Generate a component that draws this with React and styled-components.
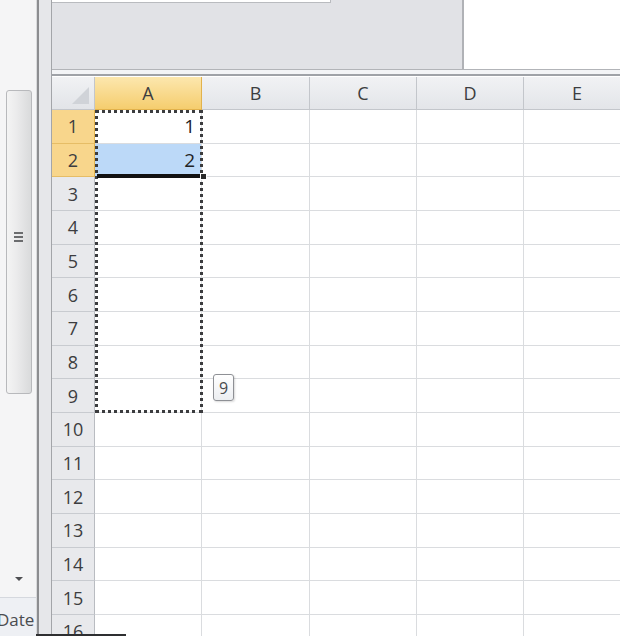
import React from 'react';
import styled, { createGlobalStyle } from 'styled-components';

const GlobalStyle = createGlobalStyle`
    html, body {
        margin: 0;
        padding: 0;
        background: #ffffff;
    }
    body {
        font-family: "Open Sans", "Liberation Sans", sans-serif;
    }
`;

const COLS = ['A', 'B', 'C', 'D', 'E'];
const ROWS = Array.from({ length: 16 }, (_, i) => i + 1);
const VALUES = { 'A1': 1, 'A2': 2 };

const App = () => {
    return (
        <>
            <GlobalStyle />
            <Screen>
                <LeftPane>
                    <ScrollTrack>
                        <Thumb>
                            <Grip>
                                <span />
                                <span />
                                <span />
                            </Grip>
                        </Thumb>
                        <DownArrow />
                    </ScrollTrack>
                    <Hint>Date r</Hint>
                </LeftPane>
                <Gutter />
                <Main>
                    <TopBar>
                        <Ribbon>
                            <RibbonStrip />
                        </Ribbon>
                        <BlankArea />
                    </TopBar>
                    <Divider />
                    <Sheet>
                        <Corner>
                            <CornerMark />
                        </Corner>
                        {COLS.map((c) => (
                            <ColHead key={c} $active={c === 'A'}>{c}</ColHead>
                        ))}
                        {ROWS.map((r) => (
                            <React.Fragment key={r}>
                                <RowHead $active={r <= 2}>{r}</RowHead>
                                {COLS.map((c) => (
                                    <Cell key={c} $selected={c === 'A' && r === 2}>
                                        {VALUES[c + r]}
                                    </Cell>
                                ))}
                            </React.Fragment>
                        ))}
                        <Marquee />
                        <FillBar />
                        <FillHandle />
                        <FillTip>9</FillTip>
                    </Sheet>
                </Main>
                <BottomEdge />
            </Screen>
        </>
    );
};

const Screen = styled.div`
    position: relative;
    width: 620px;
    height: 636px;
    overflow: hidden;
    display: flex;
`;

const LeftPane = styled.div`
    width: 36px;
    flex-shrink: 0;
    display: flex;
    flex-direction: column;
    background: #f5f5f6;
    border-right: 1px solid #d9dadc;
`;

const ScrollTrack = styled.div`
    flex: 1;
    display: flex;
    flex-direction: column;
    align-items: center;
    padding-top: 90px;
    padding-left: 1px;
`;

const Thumb = styled.div`
    width: 24px;
    height: 302px;
    border: 1px solid #b8b9bc;
    border-radius: 3px;
    background: linear-gradient(to right, #f4f4f4 0%, #ebebec 40%, #d9dadb 100%);
    display: flex;
    align-items: center;
    justify-content: center;
`;

const Grip = styled.div`
    display: flex;
    flex-direction: column;
    gap: 2px;
    margin-top: -10px;

    span {
        display: block;
        width: 9px;
        height: 2px;
        background: #6b6c6e;
    }
`;

const DownArrow = styled.div`
    margin-top: 183px;
    width: 0;
    height: 0;
    border-left: 4px solid transparent;
    border-right: 4px solid transparent;
    border-top: 4px solid #4e4f52;
`;

const Hint = styled.div`
    height: 38px;
    flex-shrink: 0;
    padding-left: 0;
    margin-left: -3px;
    border-top: 1px solid #d5d8de;
    background: #eef0f4;
    color: #4a4c50;
    font-size: 17px;
    line-height: 44px;
    white-space: nowrap;
    overflow: hidden;
`;

const Gutter = styled.div`
    width: 15px;
    flex-shrink: 0;
    background: #e6e7ea;
    border-left: 2px solid #8c8d90;
    border-right: 1px solid #a3a5a9;
    box-sizing: border-box;
`;

const Main = styled.div`
    flex: 1;
    display: flex;
    flex-direction: column;
    min-width: 0;
`;

const TopBar = styled.div`
    height: 70px;
    flex-shrink: 0;
    display: flex;
    border-bottom: 1px solid #b2b4b8;
    box-sizing: border-box;
`;

const Ribbon = styled.div`
    width: 410px;
    background: #e1e2e6;
    border-right: 2px solid #b0b2b6;
    display: flex;
    flex-direction: column;
`;

const RibbonStrip = styled.div`
    width: 278px;
    height: 2px;
    background: #ffffff;
    border-bottom: 1px solid #b9bbbf;
    border-right: 1px solid #b9bbbf;
`;

const BlankArea = styled.div`
    flex: 1;
    background: #ffffff;
`;

const Divider = styled.div`
    height: 4px;
    flex-shrink: 0;
    background: #f3f4f6;
    border-bottom: 2px solid #9fa2a7;
    margin-bottom: 1px;
`;

const Sheet = styled.div`
    position: relative;
    flex-shrink: 0;
    display: grid;
    grid-template-columns: 43px 107px 108px 107px 107px 107px;
    grid-template-rows: 33px repeat(16, 33.67px);
`;

const headBase = `
    box-sizing: border-box;
    display: flex;
    align-items: center;
    justify-content: center;
    font-size: 18px;
    color: #3c3d40;
    border-right: 1px solid #c3c6cb;
    border-bottom: 1px solid #c3c6cb;
`;

const Corner = styled.div`
    ${headBase}
    position: relative;
    background: linear-gradient(to bottom, #f1f2f4, #e2e4e8);
`;

const CornerMark = styled.div`
    position: absolute;
    right: 5px;
    bottom: 5px;
    width: 0;
    height: 0;
    border-left: 17px solid transparent;
    border-bottom: 17px solid #d0d3d8;
`;

const ColHead = styled.div`
    ${headBase}
    background: ${(p) => p.$active
        ? 'linear-gradient(to bottom, #fce7ae, #f5cd6e)'
        : 'linear-gradient(to bottom, #f1f2f4, #e3e5e9)'};
    border-right-color: ${(p) => (p.$active ? '#e2b24c' : '#c3c6cb')};
    border-bottom-color: ${(p) => (p.$active ? '#e2b24c' : '#c3c6cb')};
`;

const RowHead = styled.div`
    ${headBase}
    background: ${(p) => (p.$active ? '#f8d68c' : '#e8e9ec')};
    border-right-color: ${(p) => (p.$active ? '#e2b24c' : '#b9bcc1')};
    border-bottom-color: ${(p) => (p.$active ? '#e6bd66' : '#c8cbd0')};
`;

const Cell = styled.div`
    box-sizing: border-box;
    display: flex;
    align-items: center;
    justify-content: flex-end;
    padding: 0 6px 0 0;
    font-size: 19px;
    color: #222325;
    background: ${(p) => (p.$selected ? '#bcd9f8' : '#ffffff')};
    border-right: 1px solid #dadcdf;
    border-bottom: 1px solid #dadcdf;
`;

const Marquee = styled.div`
    position: absolute;
    left: 43px;
    top: 33px;
    width: 108px;
    height: 303px;
    box-sizing: border-box;
    border: 3px dotted #3b3c3e;
    pointer-events: none;
`;

const FillBar = styled.div`
    position: absolute;
    left: 45px;
    top: 97px;
    width: 104px;
    height: 4px;
    background: #111111;
`;

const FillHandle = styled.div`
    position: absolute;
    left: 148px;
    top: 96px;
    width: 5px;
    height: 5px;
    background: #2a2a2a;
    border: 1px solid #ffffff;
`;

const FillTip = styled.div`
    position: absolute;
    left: 161px;
    top: 297px;
    width: 21px;
    height: 27px;
    box-sizing: border-box;
    border: 1px solid #8e9095;
    border-radius: 3px;
    background: linear-gradient(to bottom, #ffffff, #eceef1);
    box-shadow: 1px 1px 2px rgba(0, 0, 0, 0.15);
    display: flex;
    align-items: center;
    justify-content: center;
    font-size: 16px;
    color: #4a4b4e;
`;

const BottomEdge = styled.div`
    position: absolute;
    left: 36px;
    bottom: 0;
    width: 90px;
    height: 2px;
    background: #2e2f31;
`;

export default App;
